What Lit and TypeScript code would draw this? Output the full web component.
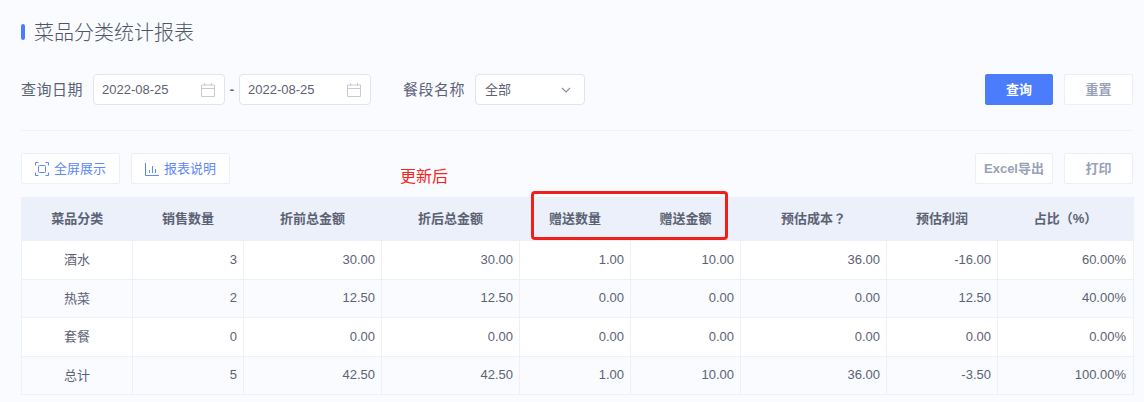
import { LitElement, html, css } from "lit";
import { customElement } from "lit/decorators.js";

const calendar = html`<svg class="cal" width="16" height="16" viewBox="0 0 16 16" fill="none" stroke="#c6cad4" stroke-width="1"><path d="M1.5 3h13v11.5h-13zM1.5 6.5h13M4.5 1v3M11.5 1v3"/></svg>`;
const rows = [
  ["酒水","3","30.00","30.00","1.00","10.00","36.00","-16.00","60.00%"],
  ["热菜","2","12.50","12.50","0.00","0.00","0.00","12.50","40.00%"],
  ["套餐","0","0.00","0.00","0.00","0.00","0.00","0.00","0.00%"],
  ["总计","5","42.50","42.50","1.00","10.00","36.00","-3.50","100.00%"],
];
const heads = [
  html`菜品分类`, html`销售数量`, html`折前总金额`, html`折后总金额`, html`赠送数量`, html`赠送金额`,
  html`预估成本<span class="qm">？</span>`, html`预估利润`,
  html`占比<span class="qm">（</span>%<span class="qm">）</span>`,
];
const widths = [111,111,138,138,111,110,146,111,136];

@customElement("app-root")
export class AppRoot extends LitElement {
  static styles = css`
    :host { display: block; position: relative; width: 1144px; height: 402px; overflow: hidden; background: #f9fbff; font-family: "Liberation Sans", "Noto Sans CJK SC", sans-serif; color: #5c6273; box-sizing: border-box; padding: 0 11px 0 21px; }
    * { box-sizing: border-box; }
    .title { display: flex; align-items: center; gap: 9px; height: 24px; margin-top: 20px; font-size: 20px; color: #4f5565; }
    .title-text { margin-top: -2px; font-weight: 300; }
    .bar { width: 4px; height: 16px; border-radius: 2px; background: #4a7cfb; }
    .filters { display: flex; align-items: center; margin-top: 30px; height: 31px; font-size: 15px; }
    .label { color: #5c6273; padding-bottom: 2px; letter-spacing: 0.5px; }
    .date, .select { height: 31px; background: #fff; border: 1px solid #e2e4ea; border-radius: 4px; display: flex; align-items: center; justify-content: space-between; font-size: 13px; color: #5c6273; }
    .date { width: 132px; padding: 0 8px 0 8px; }
    .first { margin-left: 10px; }
    .dash { width: 14px; text-align: center; font-weight: bold; font-size: 13px; }
    .select { width: 110px; margin-left: 10px; padding: 0 12px 0 9px; }
    .up { padding-bottom: 2px; }
    .group { margin-left: 32px; }
    .spacer { flex: 1; }
    .btn { height: 31px; width: 69px; display: flex; align-items: center; justify-content: center; border: 1px solid #eceff5; border-radius: 2px; background: #fff; color: #98a1b8; font-size: 13px; font-weight: bold; padding-bottom: 2px; }
    .primary { width: 68px; margin-right: 11px; background: #4a7cfb; border-color: #4a7cfb; color: #fff; }
    .wide { width: 78px; margin-right: 11px; }
    .divider { height: 1px; background: #f0f2f7; margin-top: 25px; }
    .tools { display: flex; align-items: center; margin-top: 22px; height: 31px; }
    .link { height: 31px; display: flex; align-items: center; gap: 5px; justify-content: center; background: #fff; border: 1px solid #eceff5; border-radius: 2px; color: #5d88f5; font-size: 13px; }
    .link span { padding-bottom: 2px; }
    .w99 { width: 99px; margin-right: 11px; }
    table { margin-top: 13px; width: 1112px; border-collapse: collapse; table-layout: fixed; font-size: 13px; border-left: 1px solid #edf0f8; }
    th { height: 43.5px; background: #ebf0fa; font-weight: bold; color: #5c6273; font-size: 13px; padding: 0 0 3px; }
    td { height: 38.5px; padding: 0 6px 1px 0; text-align: right; border: 1px solid #edf0f8; color: #5c6273; background: #fff; }
    td:first-child { text-align: center; padding: 0 0 2px; }
    td:last-child { padding-right: 7px; }
    tbody tr:nth-child(even) td { background: #f9fbff; }
    .qm { font-family: "Noto Sans CJK TC", sans-serif; }
    .note { position: absolute; left: 400px; top: 166px; font-size: 16px; line-height: 22px; color: #f5231c; }
    .box { position: absolute; left: 531px; top: 191px; width: 197px; height: 49px; border: 3px solid #f01f18; border-radius: 4px; }
  `;

  render() {
    return html`
      <div class="title"><span class="bar"></span><span class="title-text">菜品分类统计报表</span></div>
      <div class="filters">
        <span class="label">查询日期</span>
        <div class="date first">2022-08-25 ${calendar}</div>
        <span class="dash">-</span>
        <div class="date">2022-08-25 ${calendar}</div>
        <span class="label group">餐段名称</span>
        <div class="select"><span class="up">全部</span>
          <svg width="12" height="12" viewBox="0 0 12 12" fill="none" stroke="#8b91a1" stroke-width="1.2"><path d="M2 4l4 4 4-4"/></svg>
        </div>
        <span class="spacer"></span>
        <div class="btn primary">查询</div>
        <div class="btn">重置</div>
      </div>
      <div class="divider"></div>
      <div class="tools">
        <div class="link w99">
          <svg width="14" height="14" viewBox="0 0 14 14" fill="none" stroke="#5d88f5" stroke-width="1"><path d="M.5 3.5v-3h3M10.5.5h3v3M13.5 10.5v3h-3M3.5 13.5h-3v-3"/><rect x="3.5" y="3.5" width="7" height="7" rx="1"/></svg>
          <span>全屏展示</span></div>
        <div class="link w99">
          <svg width="14" height="14" viewBox="0 0 14 14" fill="none" stroke="#5d88f5" stroke-width="1"><path d="M.5 1v12.5H14M4.5 8v3M7.5 4v7M10.5 7v4"/></svg>
          <span>报表说明</span></div>
        <span class="spacer"></span>
        <div class="btn wide">Excel导出</div>
        <div class="btn">打印</div>
      </div>
      <table>
        <colgroup>${widths.map((w) => html`<col style="width:${w}px" />`)}</colgroup>
        <thead><tr>${heads.map((h) => html`<th>${h}</th>`)}</tr></thead>
        <tbody>${rows.map((r) => html`<tr>${r.map((c) => html`<td>${c}</td>`)}</tr>`)}</tbody>
      </table>
      <div class="note">更新后</div>
      <div class="box"></div>
    `;
  }
}
